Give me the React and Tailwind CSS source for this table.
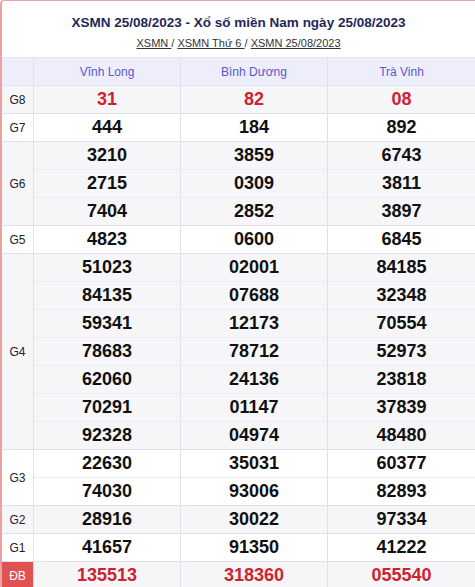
import React from "react";

const rows = [
  { g: "G8", cols: [["31"], ["82"], ["08"]], red: true },
  { g: "G7", cols: [["444"], ["184"], ["892"]] },
  { g: "G6", cols: [["3210", "2715", "7404"], ["3859", "0309", "2852"], ["6743", "3811", "3897"]] },
  { g: "G5", cols: [["4823"], ["0600"], ["6845"]] },
  {
    g: "G4",
    cols: [
      ["51023", "84135", "59341", "78683", "62060", "70291", "92328"],
      ["02001", "07688", "12173", "78712", "24136", "01147", "04974"],
      ["84185", "32348", "70554", "52973", "23818", "37839", "48480"],
    ],
  },
  { g: "G3", cols: [["22630", "74030"], ["35031", "93006"], ["60377", "82893"]] },
  { g: "G2", cols: [["28916"], ["30022"], ["97334"]] },
  { g: "G1", cols: [["41657"], ["91350"], ["41222"]] },
  { g: "ĐB", cols: [["135513"], ["318360"], ["055540"]], red: true, db: true },
];

export default function App() {
  return (
    <div
      className="w-[475px] h-[587px] overflow-hidden bg-white border-t border-l-2 border-[#e9a3a3] rounded-tl-[4px]"
      style={{ fontFamily: '"Liberation Sans", Arial, sans-serif' }}
    >
      <div className="h-[56px] flex flex-col items-center pt-[12px]">
        <div className="text-[13.5px] leading-[19px] font-bold text-[#1f2858]">
          XSMN 25/08/2023 - Xổ số miền Nam ngày 25/08/2023
        </div>
        <div className="text-[11px] leading-[16px] mt-[3px] text-[#333]">
          <span className="underline">XSMN </span>
          <span> / </span>
          <span className="underline">XSMN Thứ 6 </span>
          <span> / </span>
          <span className="underline">XSMN 25/08/2023</span>
        </div>
      </div>
      <div className="grid grid-cols-[32px_147px_147px_1fr] h-[28px] bg-[#ededfc] border-t border-[#e4e4ec] text-[12px] text-[#5a5acb]">
        <div className="border-r border-[#e0e0ea]"></div>
        <div className="flex items-center justify-center border-r border-[#e0e0ea]">Vĩnh Long</div>
        <div className="flex items-center justify-center border-r border-[#e0e0ea]">Bình Dương</div>
        <div className="flex items-center justify-center">Trà Vinh</div>
      </div>
      {rows.map((r, i) => (
        <div
          key={r.g}
          className={
            "grid grid-cols-[32px_147px_147px_1fr] border-t border-[#e2e2e6] " +
            (i % 2 === 0 ? "bg-[#f6f6f8]" : "bg-white")
          }
        >
          <div
            className={
              "flex items-center justify-center text-[12px] border-r border-[#e2e2e6] " +
              (r.db ? "bg-[#e05252] text-white" : "text-[#222]")
            }
          >
            {r.g}
          </div>
          {r.cols.map((c, j) => (
            <div key={j} className={"flex flex-col " + (j < 2 ? "border-r border-[#e2e2e6]" : "")}>
              {c.map((n, k) => (
                <div
                  key={k}
                  className={
                    "flex items-center justify-center text-[18px] font-bold " +
                    (k > 0 ? "h-[28px] border-t border-[#ececf0] " : "h-[27px] ") +
                    (r.red ? "text-[#cf2230]" : "text-[#111]")
                  }
                >
                  {n}
                </div>
              ))}
            </div>
          ))}
        </div>
      ))}
    </div>
  );
}
